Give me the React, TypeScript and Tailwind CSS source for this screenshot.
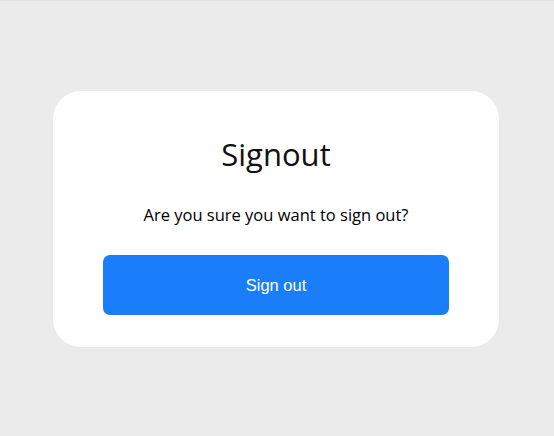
export default function App() {
  return (
    <div className="min-h-[436px] w-full bg-[#ebebeb] border-t border-[#e0e0e0] flex items-center justify-center pt-[1px] pr-[2px]">
      <div className="w-[446px] h-[256px] rounded-[28px] bg-white px-[50px] pt-[39px] flex flex-col items-center">
        <h1 className="text-[31px] leading-[48px] text-[#111111] font-['Open_Sans',sans-serif] font-normal">
          Signout
        </h1>
        <p className="mt-[25px] text-[16.5px] leading-[24px] text-black font-['Open_Sans',sans-serif]">
          Are you sure you want to sign out?
        </p>
        <button className="mt-[28px] w-full h-[60px] rounded-[7px] bg-[#1a7efb] text-white text-[16.5px] font-['Liberation_Sans',Arial,sans-serif]">
          Sign out
        </button>
      </div>
    </div>
  )
}
